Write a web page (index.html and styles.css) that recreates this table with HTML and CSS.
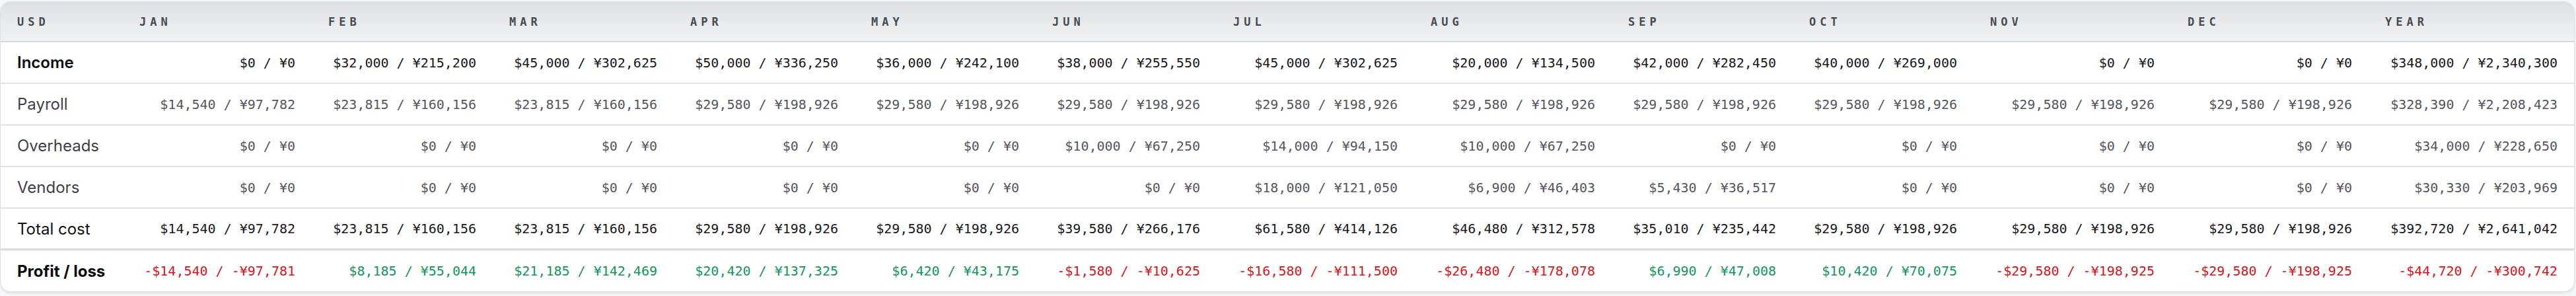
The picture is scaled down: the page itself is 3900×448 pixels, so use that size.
FILE: index.html
```html
<!DOCTYPE html>
<html lang="en">
<head>
<meta charset="utf-8">
<title>Profit and loss</title>
<link rel="stylesheet" href="styles.css">
</head>
<body>
<div class="card">
  <table class="pl">
    <colgroup>
      <col class="c-label">
      <col class="c-19">
      <col class="c-18"><col class="c-18"><col class="c-18"><col class="c-18"><col class="c-18">
      <col class="c-20"><col class="c-20">
      <col class="c-18"><col class="c-18">
      <col class="c-20"><col class="c-20">
      <col class="c-year">
    </colgroup>
    <thead>
      <tr class="head">
        <th class="lbl">USD</th>
        <th>JAN</th><th>FEB</th><th>MAR</th><th>APR</th><th>MAY</th><th>JUN</th>
        <th>JUL</th><th>AUG</th><th>SEP</th><th>OCT</th><th>NOV</th><th>DEC</th><th>YEAR</th>
      </tr>
    </thead>
    <tbody>
      <tr class="row income">
        <td class="lbl">Income</td>
        <td>$0 / ¥0</td><td>$32,000 / ¥215,200</td><td>$45,000 / ¥302,625</td><td>$50,000 / ¥336,250</td><td>$36,000 / ¥242,100</td><td>$38,000 / ¥255,550</td>
        <td>$45,000 / ¥302,625</td><td>$20,000 / ¥134,500</td><td>$42,000 / ¥282,450</td><td>$40,000 / ¥269,000</td><td>$0 / ¥0</td><td>$0 / ¥0</td><td>$348,000 / ¥2,340,300</td>
      </tr>
      <tr class="row sub">
        <td class="lbl">Payroll</td>
        <td>$14,540 / ¥97,782</td><td>$23,815 / ¥160,156</td><td>$23,815 / ¥160,156</td><td>$29,580 / ¥198,926</td><td>$29,580 / ¥198,926</td><td>$29,580 / ¥198,926</td>
        <td>$29,580 / ¥198,926</td><td>$29,580 / ¥198,926</td><td>$29,580 / ¥198,926</td><td>$29,580 / ¥198,926</td><td>$29,580 / ¥198,926</td><td>$29,580 / ¥198,926</td><td>$328,390 / ¥2,208,423</td>
      </tr>
      <tr class="row sub">
        <td class="lbl">Overheads</td>
        <td>$0 / ¥0</td><td>$0 / ¥0</td><td>$0 / ¥0</td><td>$0 / ¥0</td><td>$0 / ¥0</td><td>$10,000 / ¥67,250</td>
        <td>$14,000 / ¥94,150</td><td>$10,000 / ¥67,250</td><td>$0 / ¥0</td><td>$0 / ¥0</td><td>$0 / ¥0</td><td>$0 / ¥0</td><td>$34,000 / ¥228,650</td>
      </tr>
      <tr class="row sub">
        <td class="lbl">Vendors</td>
        <td>$0 / ¥0</td><td>$0 / ¥0</td><td>$0 / ¥0</td><td>$0 / ¥0</td><td>$0 / ¥0</td><td>$0 / ¥0</td>
        <td>$18,000 / ¥121,050</td><td>$6,900 / ¥46,403</td><td>$5,430 / ¥36,517</td><td>$0 / ¥0</td><td>$0 / ¥0</td><td>$0 / ¥0</td><td>$30,330 / ¥203,969</td>
      </tr>
      <tr class="row total">
        <td class="lbl">Total cost</td>
        <td>$14,540 / ¥97,782</td><td>$23,815 / ¥160,156</td><td>$23,815 / ¥160,156</td><td>$29,580 / ¥198,926</td><td>$29,580 / ¥198,926</td><td>$39,580 / ¥266,176</td>
        <td>$61,580 / ¥414,126</td><td>$46,480 / ¥312,578</td><td>$35,010 / ¥235,442</td><td>$29,580 / ¥198,926</td><td>$29,580 / ¥198,926</td><td>$29,580 / ¥198,926</td><td>$392,720 / ¥2,641,042</td>
      </tr>
      <tr class="row profit">
        <td class="lbl">Profit / loss</td>
        <td class="neg">-$14,540 / -¥97,781</td><td class="pos">$8,185 / ¥55,044</td><td class="pos">$21,185 / ¥142,469</td><td class="pos">$20,420 / ¥137,325</td><td class="pos">$6,420 / ¥43,175</td><td class="neg">-$1,580 / -¥10,625</td>
        <td class="neg">-$16,580 / -¥111,500</td><td class="neg">-$26,480 / -¥178,078</td><td class="pos">$6,990 / ¥47,008</td><td class="pos">$10,420 / ¥70,075</td><td class="neg">-$29,580 / -¥198,925</td><td class="neg">-$29,580 / -¥198,925</td><td class="neg">-$44,720 / -¥300,742</td>
      </tr>
    </tbody>
  </table>
</div>
</body>
</html>
```

FILE: styles.css
```css
html, body {
  margin: 0;
  padding: 0;
}

body {
  background: #f6f7f8;
  padding: 2px 2px 5px 0;
}

.card {
  background: #ffffff;
  border: 1px solid #dfe1e4;
  border-radius: 16px;
  box-shadow: 0 2px 4px rgba(20, 24, 30, 0.10);
  overflow: hidden;
}

.pl {
  width: 100%;
  border-collapse: collapse;
  table-layout: fixed;
}

.c-label { width: 185px; }
.c-19 { width: 286px; }
.c-18 { width: 274px; }
.c-20 { width: 299px; }
.c-year { width: 311px; }

.head th {
  height: 59px;
  padding: 0 25px;
  text-align: left;
  font-family: "DejaVu Sans Mono", "Liberation Mono", monospace;
  font-size: 17px;
  font-weight: 700;
  letter-spacing: 6px;
  color: #464b53;
  background: linear-gradient(180deg, #dde0e3 0%, #e9ebed 55%, #eef0f2 100%);
  border-bottom: 2px solid #d5d8dc;
  white-space: nowrap;
}

.head th.lbl {
  padding-left: 25px;
}

.row td {
  height: 61px;
  padding: 0 25px;
  text-align: right;
  font-family: "DejaVu Sans Mono", "Liberation Mono", monospace;
  font-size: 20px;
  color: #18181b;
  border-bottom: 2px solid #e1e3e6;
  white-space: nowrap;
}

.row td.lbl {
  text-align: left;
  font-family: Inter, "Noto Sans", sans-serif;
  font-size: 24px;
  padding-left: 25px;
  padding-right: 0;
}

.income td.lbl {
  font-weight: 600;
  color: #0b0b0d;
}

.sub td {
  color: #55565c;
}

.sub td.lbl {
  color: #3f4046;
  font-weight: 400;
}

.total td {
  height: 60px;
  border-bottom: 3px solid #d9dbdf;
}

.total td.lbl {
  color: #111114;
  font-weight: 400;
}

.profit td {
  height: 62px;
  border-bottom: none;
}

.profit td.lbl {
  font-weight: 700;
  color: #0b0b0d;
}

.profit td.neg {
  color: #d4161c;
}

.profit td.pos {
  color: #12955a;
}
```
